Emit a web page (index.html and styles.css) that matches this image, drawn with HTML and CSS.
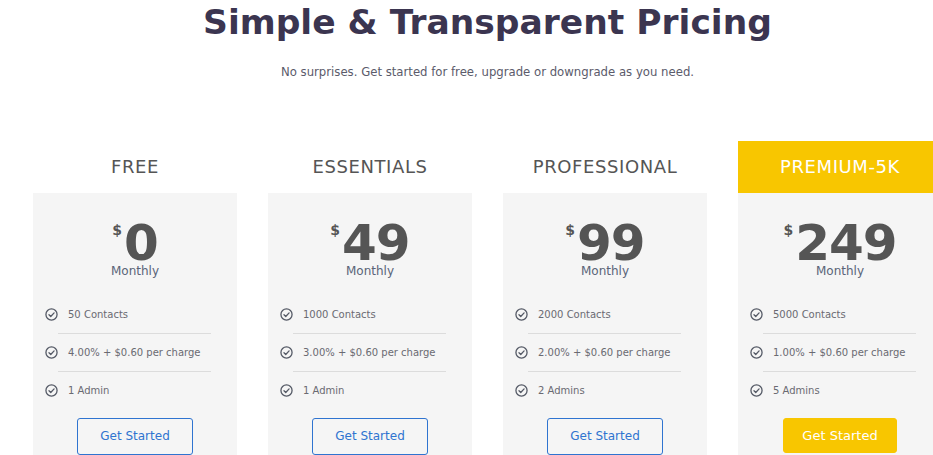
FILE: index.html
```html
<!DOCTYPE html>
<html lang="en">
<head>
<meta charset="utf-8">
<title>Pricing</title>
<link rel="stylesheet" href="styles.css">
</head>
<body>
<div class="page">
  <h1 class="title">Simple &amp; Transparent Pricing</h1>
  <p class="subtitle">No surprises. Get started for free, upgrade or downgrade as you need.</p>
  <div class="plans">
    <div class="plan">
      <div class="plan-name">FREE</div>
      <div class="plan-body">
        <div class="price"><span class="cur">$</span><span class="amount">0</span></div>
        <div class="period">Monthly</div>
        <ul class="features">
          <li><svg class="chk" viewBox="0 0 14 14"><circle cx="7" cy="7" r="6"/><path d="M4.3 7.2l1.9 1.9 3.6-3.8"/></svg>50 Contacts</li>
          <li><svg class="chk" viewBox="0 0 14 14"><circle cx="7" cy="7" r="6"/><path d="M4.3 7.2l1.9 1.9 3.6-3.8"/></svg>4.00% + $0.60 per charge</li>
          <li><svg class="chk" viewBox="0 0 14 14"><circle cx="7" cy="7" r="6"/><path d="M4.3 7.2l1.9 1.9 3.6-3.8"/></svg>1 Admin</li>
        </ul>
        <a class="btn">Get Started</a>
      </div>
    </div>
    <div class="plan">
      <div class="plan-name">ESSENTIALS</div>
      <div class="plan-body">
        <div class="price"><span class="cur">$</span><span class="amount">49</span></div>
        <div class="period">Monthly</div>
        <ul class="features">
          <li><svg class="chk" viewBox="0 0 14 14"><circle cx="7" cy="7" r="6"/><path d="M4.3 7.2l1.9 1.9 3.6-3.8"/></svg>1000 Contacts</li>
          <li><svg class="chk" viewBox="0 0 14 14"><circle cx="7" cy="7" r="6"/><path d="M4.3 7.2l1.9 1.9 3.6-3.8"/></svg>3.00% + $0.60 per charge</li>
          <li><svg class="chk" viewBox="0 0 14 14"><circle cx="7" cy="7" r="6"/><path d="M4.3 7.2l1.9 1.9 3.6-3.8"/></svg>1 Admin</li>
        </ul>
        <a class="btn">Get Started</a>
      </div>
    </div>
    <div class="plan">
      <div class="plan-name">PROFESSIONAL</div>
      <div class="plan-body">
        <div class="price"><span class="cur">$</span><span class="amount">99</span></div>
        <div class="period">Monthly</div>
        <ul class="features">
          <li><svg class="chk" viewBox="0 0 14 14"><circle cx="7" cy="7" r="6"/><path d="M4.3 7.2l1.9 1.9 3.6-3.8"/></svg>2000 Contacts</li>
          <li><svg class="chk" viewBox="0 0 14 14"><circle cx="7" cy="7" r="6"/><path d="M4.3 7.2l1.9 1.9 3.6-3.8"/></svg>2.00% + $0.60 per charge</li>
          <li><svg class="chk" viewBox="0 0 14 14"><circle cx="7" cy="7" r="6"/><path d="M4.3 7.2l1.9 1.9 3.6-3.8"/></svg>2 Admins</li>
        </ul>
        <a class="btn">Get Started</a>
      </div>
    </div>
    <div class="plan featured">
      <div class="plan-name">PREMIUM-5K</div>
      <div class="plan-body">
        <div class="price"><span class="cur">$</span><span class="amount">249</span></div>
        <div class="period">Monthly</div>
        <ul class="features">
          <li><svg class="chk" viewBox="0 0 14 14"><circle cx="7" cy="7" r="6"/><path d="M4.3 7.2l1.9 1.9 3.6-3.8"/></svg>5000 Contacts</li>
          <li><svg class="chk" viewBox="0 0 14 14"><circle cx="7" cy="7" r="6"/><path d="M4.3 7.2l1.9 1.9 3.6-3.8"/></svg>1.00% + $0.60 per charge</li>
          <li><svg class="chk" viewBox="0 0 14 14"><circle cx="7" cy="7" r="6"/><path d="M4.3 7.2l1.9 1.9 3.6-3.8"/></svg>5 Admins</li>
        </ul>
        <a class="btn btn-solid">Get Started</a>
      </div>
    </div>
  </div>
</div>
</body>
</html>
```

FILE: styles.css
```css
html, body {
  margin: 0;
  padding: 0;
  background: #ffffff;
  overflow: hidden;
}
body {
  font-family: "DejaVu Sans", "Open Sans", sans-serif;
  color: #555555;
}
.page {
  width: 909px;
  margin-left: 33px;
}
.title {
  margin: 0;
  padding-top: 2px;
  text-align: center;
  font-size: 34.5px;
  line-height: 40px;
  font-weight: bold;
  color: #3b3550;
  letter-spacing: 0;
}
.subtitle {
  margin: 23px 0 0;
  text-align: center;
  font-size: 11.7px;
  line-height: 14px;
  color: #5b5b6b;
}
.plans {
  display: flex;
  gap: 31px;
  margin-top: 62px;
}
.plan {
  width: 204px;
  flex: 0 0 204px;
}
.plan-name {
  height: 52px;
  display: flex;
  align-items: center;
  justify-content: center;
  font-size: 18px;
  letter-spacing: 0.6px;
  color: #555555;
  padding-bottom: 1px;
  box-sizing: border-box;
}
.featured .plan-name {
  background: #f8c600;
  color: #ffffff;
}
.plan-body {
  background: #f5f5f5;
  height: 280px;
  padding-top: 30px;
  box-sizing: border-box;
  text-align: center;
}
.price {
  display: flex;
  justify-content: center;
  align-items: flex-start;
  color: #555555;
  font-weight: bold;
  height: 40px;
}
.cur {
  font-size: 14px;
  line-height: 14px;
  margin-right: 2px;
}
.amount {
  font-size: 50px;
  line-height: 40px;
  letter-spacing: -1px;
}
.period {
  margin-top: 1px;
  font-size: 12px;
  line-height: 14px;
  color: #5a6478;
}
.features {
  list-style: none;
  margin: 18px 0 0;
  padding: 0 26px 0 12px;
  text-align: left;
}
.features li {
  display: flex;
  align-items: center;
  height: 37px;
  font-size: 10px;
  color: #6a6a72;
}
.features li + li {
  border-top: 1px solid #dcdcdc;
  margin-left: 13px;
}
.features li + li .chk {
  margin-left: -13px;
}
.chk {
  width: 13px;
  height: 13px;
  margin-right: 10px;
  fill: none;
  stroke: #555a66;
  stroke-width: 1.4;
  stroke-linecap: round;
  stroke-linejoin: round;
}
.btn {
  display: block;
  width: 116px;
  height: 37px;
  margin: 9px auto 0;
  box-sizing: border-box;
  border: 1px solid #2f74d0;
  border-radius: 3px;
  color: #2f74d0;
  font-size: 12px;
  line-height: 35px;
  text-align: center;
}
.btn-solid {
  background: #f8c600;
  border-color: #f8c600;
  color: #ffffff;
  width: 114px;
  height: 35px;
  line-height: 33px;
  font-size: 13px;
}
```
